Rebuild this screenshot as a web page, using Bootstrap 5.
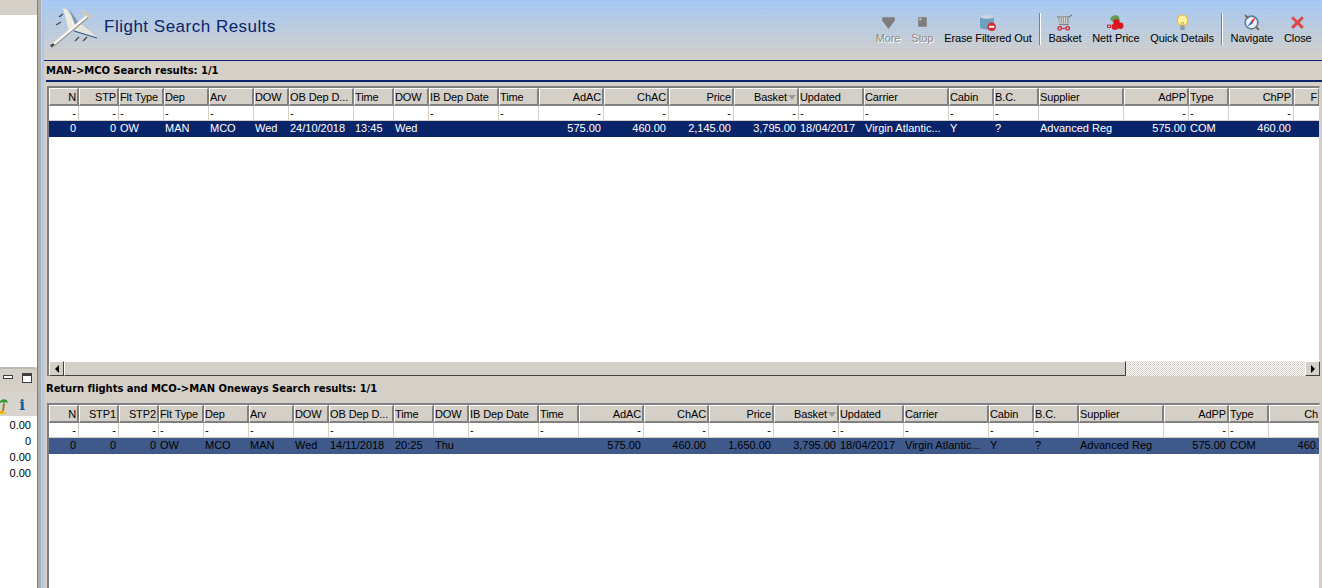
<!DOCTYPE html>
<html lang="en">
<head>
<meta charset="utf-8">
<title>Flight Search Results</title>
<link href="https://cdn.jsdelivr.net/npm/bootstrap@5.3.0/dist/css/bootstrap.min.css" rel="stylesheet">
<style>
html,body{height:588px;overflow:hidden}
body{background:#d4d0c8;font-family:"Liberation Sans",Arial,sans-serif;font-size:11px;color:#000;line-height:1}
.shell{height:588px;width:1322px}
.side{width:37px;background:#fff;flex:none}
.side-top{height:15px;background:#d4d0c8;flex:none}
.side-gap{height:349px;flex:none}
.side-low{padding-top:3px;flex:none;background:linear-gradient(#fff 0 3px,#d4d0c8 3px)}
.side-head{height:25px;background:#d4d0c8;border-top:2px solid #bdb9b1;border-top-right-radius:5px;gap:9px;padding:4px 0 0 3px}
.side-tool{height:24px;background:#d8d5ce;padding:0 12px 0 0}
.side-vals{text-align:right;padding:1px 6px 0 0;font-size:11px}
.side-vals div{height:16px;line-height:16px}
.split{width:5px;flex:none;background:#b0aea8;border-left:1px solid #808080;border-right:1px solid #d4d0c8}
.edge{width:2px;flex:none;background:#a9c8f5}
.main{width:1278px;flex:none;min-width:0}
.main>*{flex:none}
.banner{height:61px;border-bottom:1px solid #0a246a;background:repeating-linear-gradient(0deg,rgba(255,255,255,.05) 0 1px,rgba(0,0,0,.02) 1px 2px),linear-gradient(#a6c9f7,#d4d0c8)}
.plane{width:48px;height:40px;margin:8px 0 0 6px;flex:none}
.ttl{font-size:17px;color:#0a246a;margin:17px 0 0 6px;line-height:20px;letter-spacing:.5px}
.tools{padding:14px 5px 0 0}
.tb{display:flex;flex-direction:column;align-items:center;padding:0 5.4px;height:32px;letter-spacing:-.1px}
.tb svg{width:17px;height:17px;margin-bottom:1px;display:block;flex:none}
.tb span{white-space:nowrap;line-height:12px}
.tb.off span{color:#8c8a86;text-shadow:1px 1px 0 #fff}
.tsep{width:2px;height:32px;background:#fff;border-left:1px solid #808080;margin:-1px 2px 0}
.sect{font-family:"DejaVu Sans",sans-serif;font-weight:700;font-size:10px;padding:3px 0 0 2px;height:19px;line-height:14px;letter-spacing:-.06px;white-space:nowrap}
.sect-b{height:18px;padding-top:3px}
.rule{height:2px;margin-left:2px;background:#0a246a}
.rule.fade{background:linear-gradient(90deg,#0a246a,#d4d0c8)}
.grid{margin:4px 2px 0 3px;border-top:2px solid #808080;border-left:2px solid #808080;border-right:1px solid #d4d0c8;background:#fff;overflow:hidden}
.grid-a{height:274px}
.grid-b{height:185px}
.gt{table-layout:fixed;border-collapse:separate;border-spacing:0;white-space:nowrap;margin:0}
.gt-a{width:1271px}
.gt-b{width:1270px}
.gt th{font-weight:400;height:18px;background:#d4d0c8;border-top:1px solid #fff;border-left:1px solid #fff;border-right:2px solid #808080;border-bottom:2px solid #808080;padding:1px 1px 0 0;overflow:hidden;letter-spacing:-.1px}
.gt td{height:15px;padding:0 2px 0 1px;overflow:hidden;border-right:1px solid #d4d0c8;border-bottom:1px solid #d4d0c8}
.gt td,.gt th{line-height:13px;color:#000}
.gt .r{text-align:right}
.gt th.r{padding-right:1px}
.gt tr.sel td{background:#0a246a;color:#fff;border-color:#0a246a;height:16px}
.grid-b .gt tr.sel td{background:#3f5a8a;color:#000;border-color:#3f5a8a}
.gt .clip,.gt tr.sel td.clip{border-right:0;padding-right:0}
.sort{display:inline-block;width:0;height:0;border:4px solid transparent;border-top:5px solid #a09c94;border-bottom:0;vertical-align:middle;margin-left:1px}
.hs{height:16px;margin:0 2px 0 3px;border-left:2px solid #808080;background:#fff}
.hs-in{background:repeating-conic-gradient(#d4d0c8 0 25%,#fff 0 50%) 0 0/2px 2px;border-top:1px solid #fff}
.hbtn{width:15px;height:15px;margin-top:1px;background:#d4d0c8;border-top:1px solid #fff;border-left:1px solid #fff;border-right:1px solid #404040;border-bottom:1px solid #404040;display:flex;align-items:center;justify-content:center;flex:none}
.thumb{width:1062px;height:15px;margin-top:1px;background:#d4d0c8;border-top:1px solid #fff;border-left:1px solid #fff;border-right:1px solid #404040;border-bottom:1px solid #404040;flex:none}
.arr-l{width:0;height:0;border:4px solid transparent;border-right:4px solid #000;border-left:0}
.arr-r{width:0;height:0;border:4px solid transparent;border-left:4px solid #000;border-right:0}
.fill{flex:1}
.band{height:3px}
.winbtn{display:block;flex:none;border:1px solid #404040;background:#fff}
.w1{width:10px;height:4px;margin-top:2px}
.w2{width:10px;height:10px;border-top-width:3px}
.palm{width:8px;height:16px;margin-top:3px}
.info{color:#0a5ca8;font-family:"DejaVu Serif",serif;font-weight:700;font-size:15px;margin-top:2px}
</style>
</head>
<body>
<div class="shell d-flex">
  <div class="side d-flex flex-column">
    <div class="side-top"></div>
    <div class="side-gap"></div>
    <div class="side-low">
      <div class="side-head d-flex"><span class="winbtn w1"></span><span class="winbtn w2"></span></div>
      <div class="side-tool d-flex align-items-center justify-content-between">
        <svg class="palm" viewBox="0 0 8 16"><path d="M0 14h6v2H0z" fill="#f2c800"/><path d="M0 13h3v2H0z" fill="#e8a800"/><path d="M2 13l1-7h2l-1 7z" fill="#a87a28"/><path d="M0 3l3-2 4 1 1 3-3-1-1 3-1-3-3 1z" fill="#3a9a3a"/></svg>
        <span class="info">i</span>
      </div>
    </div>
    <div class="side-vals"><div>0.00</div><div>0</div><div>0.00</div><div>0.00</div></div>
  </div>
  <div class="split"></div>
  <div class="edge"></div>
  <div class="main d-flex flex-column">
    <div class="banner d-flex">
      <svg class="plane" viewBox="0 0 48 40">
        <path d="M13 0 L16 1 L28 16 L19 23 z" fill="#efecdf"/>
        <path d="M19 1 L29 15 L25 17 Z" fill="#7f95bc"/>
        <path d="M24 22 L31 16 L47 29 L36 26 z" fill="#e8e6dc"/>
        <path d="M24 23 L47 30" stroke="#2f4f8f" stroke-width="1"/>
        <path d="M34 8 L31 2 L34 2 L38 6 L43 7 L41 10 L36 11z" fill="#cfcbbb"/>
        <path d="M2 38 L36 10" stroke="#8a8a8a" stroke-width="3.4" stroke-linecap="round"/>
        <path d="M3 36.500 L36 9" stroke="#fbfaf4" stroke-width="2.4" stroke-linecap="round"/>
        <path d="M1 38l3-2" stroke="#333" stroke-width="2"/>
        <path d="M6 17l5-3M9 9l4-3M25 33l4-4M33 33l4-4" stroke="#444" stroke-width="1.200"/>
      </svg>
      <div class="ttl">Flight Search Results</div>
      <div class="tools ms-auto d-flex">
        <div class="tb off"><svg viewBox="0 0 16 16"><path d="M2 3h12v3l-3 4-3 4-3-4-3-4z" fill="#7c7c7c"/></svg><span>More</span></div>
        <div class="tb off"><svg viewBox="0 0 16 16"><rect x="4" y="3" width="8" height="9" fill="#7c7c7c"/><rect x="5" y="4" width="2" height="2" fill="#c4c4c4"/></svg><span>Stop</span></div>
        <div class="tb"><svg viewBox="0 0 16 16"><path d="M1 2h13v11c-2 2-11 2-13 0z" fill="#6f9fc0"/><ellipse cx="7.500" cy="2.500" rx="6.500" ry="2" fill="#c7d6dc"/><circle cx="12" cy="12" r="4" fill="#d8262c"/><rect x="9.500" y="11" width="5" height="2" fill="#fff"/></svg><span>Erase Filtered Out</span></div>
        <div class="tsep"></div>
        <div class="tb"><svg viewBox="0 0 16 16"><path d="M1 3h11l3-2" fill="none" stroke="#777" stroke-width="1.200"/><path d="M2 3h10v6H3z" fill="#999"/><path d="M4 3v6M6 3v6M8 3v6M10 3v6" stroke="#e0e0e0" stroke-width=".8"/><path d="M3 10h9" stroke="#777"/><circle cx="3.500" cy="13.500" r="1.700" fill="none" stroke="#d0202a" stroke-width="1.200"/><circle cx="11" cy="13.500" r="1.700" fill="none" stroke="#d0202a" stroke-width="1.200"/><path d="M5 13.500h4" stroke="#d0202a"/></svg><span>Basket</span></div>
        <div class="tb"><svg viewBox="0 0 16 16"><path d="M3 5c0-3 5-5 8-3l1 4-6 2z" fill="#5f9a4e"/><circle cx="9" cy="8" r="3" fill="#d8141c"/><circle cx="12.500" cy="11" r="3" fill="#d8141c"/><circle cx="7.500" cy="12" r="3" fill="#e01a20"/><rect x="0" y="10" width="4" height="3" fill="#d8141c"/><rect x="1" y="11" width="2" height="1" fill="#fff"/></svg><span>Nett Price</span></div>
        <div class="tb"><svg viewBox="0 0 16 16"><circle cx="8" cy="6" r="5" fill="#fff3a0" stroke="#e8b838"/><path d="M7 11V8h2v3" fill="none" stroke="#d8a828" stroke-width=".8"/><rect x="6" y="11" width="4" height="4" fill="#8f9aa8"/></svg><span>Quick Details</span></div>
        <div class="tsep"></div>
        <div class="tb"><svg viewBox="0 0 16 16"><circle cx="8" cy="8" r="6" fill="#eaf2fa" stroke="#5f7f9f" stroke-width="1.600"/><path d="M4 12l4-6 1 3z" fill="#2f6fc8"/><path d="M8 6l4-3-3 6z" fill="#d8262c"/><path d="M2 1l3 3M12 12l3 3" stroke="#7a5a30" stroke-width="1.600"/></svg><span>Navigate</span></div>
        <div class="tb"><svg viewBox="0 0 16 16"><path d="M2 4l2-2 4 4 4-4 2 2-4 4 4 4-2 2-4-4-4 4-2-2 4-4z" fill="#e04848"/></svg><span>Close</span></div>
      </div>
    </div>
    <div class="sect">MAN-&gt;MCO Search results: 1/1</div>
    <div class="rule"></div>
    <div class="grid grid-a">
      <table class="gt gt-a">
        <colgroup><col width="30"><col width="40"><col width="45"><col width="45"><col width="45"><col width="35"><col width="65"><col width="40"><col width="35"><col width="70"><col width="40"><col width="65"><col width="65"><col width="65"><col width="65"><col width="65"><col width="85"><col width="45"><col width="45"><col width="85"><col width="65"><col width="40"><col width="65"><col width="26"></colgroup>
        <tr><th class="r">N</th><th class="r">STP</th><th>Flt Type</th><th>Dep</th><th>Arv</th><th>DOW</th><th>OB Dep D...</th><th>Time</th><th>DOW</th><th>IB Dep Date</th><th>Time</th><th class="r">AdAC</th><th class="r">ChAC</th><th class="r">Price</th><th class="r">Basket<span class="sort"></span></th><th>Updated</th><th>Carrier</th><th>Cabin</th><th>B.C.</th><th>Supplier</th><th class="r">AdPP</th><th>Type</th><th class="r">ChPP</th><th class="r">F</th></tr>
        <tr><td class="r">-</td><td class="r">-</td><td>-</td><td>-</td><td>-</td><td></td><td>-</td><td></td><td></td><td>-</td><td>-</td><td class="r">-</td><td class="r">-</td><td class="r">-</td><td class="r">-</td><td>-</td><td>-</td><td>-</td><td>-</td><td></td><td class="r">-</td><td>-</td><td class="r">-</td><td></td></tr>
        <tr class="sel"><td class="r">0</td><td class="r">0</td><td>OW</td><td>MAN</td><td>MCO</td><td>Wed</td><td>24/10/2018</td><td>13:45</td><td>Wed</td><td></td><td></td><td class="r">575.00</td><td class="r">460.00</td><td class="r">2,145.00</td><td class="r">3,795.00</td><td>18/04/2017</td><td>Virgin Atlantic...</td><td>Y</td><td>?</td><td>Advanced Reg</td><td class="r">575.00</td><td>COM</td><td class="r">460.00</td><td></td></tr>
      </table>
    </div>
    <div class="hs d-flex">
      <div class="hbtn"><span class="arr-l"></span></div>
      <div class="thumb"></div>
      <div class="hs-in fill"></div>
      <div class="hbtn"><span class="arr-r"></span></div>
    </div>
    <div class="band"></div>
    <div class="sect sect-b">Return flights and MCO-&gt;MAN Oneways Search results: 1/1</div>
    <div class="rule fade"></div>
    <div class="grid grid-b">
      <table class="gt gt-b">
        <colgroup><col width="30"><col width="40"><col width="40"><col width="45"><col width="45"><col width="45"><col width="35"><col width="65"><col width="40"><col width="35"><col width="70"><col width="40"><col width="65"><col width="65"><col width="65"><col width="65"><col width="65"><col width="85"><col width="45"><col width="45"><col width="85"><col width="65"><col width="40"><col width="50"></colgroup>
        <tr><th class="r">N</th><th class="r">STP1</th><th class="r">STP2</th><th>Flt Type</th><th>Dep</th><th>Arv</th><th>DOW</th><th>OB Dep D...</th><th>Time</th><th>DOW</th><th>IB Dep Date</th><th>Time</th><th class="r">AdAC</th><th class="r">ChAC</th><th class="r">Price</th><th class="r">Basket<span class="sort"></span></th><th>Updated</th><th>Carrier</th><th>Cabin</th><th>B.C.</th><th>Supplier</th><th class="r">AdPP</th><th>Type</th><th class="r clip">Ch</th></tr>
        <tr><td class="r">-</td><td class="r">-</td><td class="r">-</td><td>-</td><td>-</td><td>-</td><td></td><td>-</td><td></td><td></td><td>-</td><td>-</td><td class="r">-</td><td class="r">-</td><td class="r">-</td><td class="r">-</td><td>-</td><td>-</td><td>-</td><td>-</td><td></td><td class="r">-</td><td>-</td><td></td></tr>
        <tr class="sel"><td class="r">0</td><td class="r">0</td><td class="r">0</td><td>OW</td><td>MCO</td><td>MAN</td><td>Wed</td><td>14/11/2018</td><td>20:25</td><td>Thu</td><td></td><td></td><td class="r">575.00</td><td class="r">460.00</td><td class="r">1,650.00</td><td class="r">3,795.00</td><td>18/04/2017</td><td>Virgin Atlantic...</td><td>Y</td><td>?</td><td>Advanced Reg</td><td class="r">575.00</td><td>COM</td><td class="r clip">460.</td></tr>
      </table>
    </div>
  </div>
</div>
<script src="https://cdn.jsdelivr.net/npm/bootstrap@5.3.0/dist/js/bootstrap.bundle.min.js"></script>
</body>
</html>
